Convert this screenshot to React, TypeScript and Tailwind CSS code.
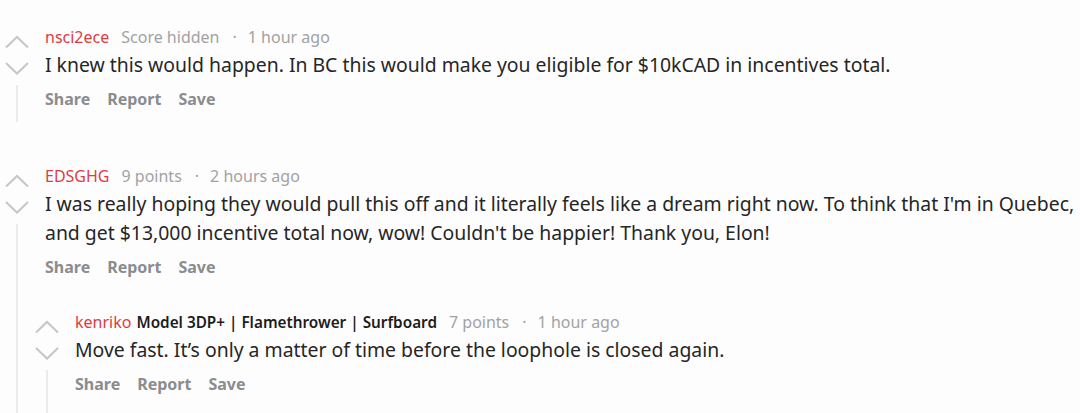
import React from 'react';

const font = { fontFamily: '"Noto Sans", "Open Sans", sans-serif' };

const UpArrow = () => (
  <svg width="26" height="14" viewBox="0 0 26 14" className="block">
    <polyline points="2,12.5 13,2 24,12.5" fill="none" stroke="#c6c6c6" strokeWidth="2" />
  </svg>
);

const DownArrow = () => (
  <svg width="26" height="14" viewBox="0 0 26 14" className="block">
    <polyline points="2,2 13,12.5 24,2" fill="none" stroke="#c6c6c6" strokeWidth="2" />
  </svg>
);

type CommentProps = {
  user: string;
  flair?: string;
  score: string;
  time: string;
  lines: string[];
  railWidth: string;
  contentPad: string;
  children?: React.ReactNode;
  bottomPad?: string;
};

const Comment: React.FC<CommentProps> = ({
  user,
  flair,
  score,
  time,
  lines,
  railWidth,
  contentPad,
  children,
  bottomPad = '',
}) => {
  return (
    <div className="flex">
      <div className={`flex ${railWidth} shrink-0 flex-col items-center pt-[8px]`}>
        <UpArrow />
        <div className="h-[12px]" />
        <DownArrow />
        <div className="mt-[10px] w-[2px] flex-1 bg-[#ececec]" />
      </div>
      <div className="flex-1">
        <div className={`${contentPad} ${bottomPad}`}>
          <div className="flex h-[20px] items-center whitespace-nowrap text-[16px] leading-[20px]">
            <span className="text-[#dd3c41]">{user}</span>
            {flair && (
              <span className="ml-[5px] text-[15.3px] font-semibold text-[#1c1c1c]">{flair}</span>
            )}
            <span className="ml-[12px] text-[#a2a2a2]">{score}</span>
            <span className="ml-[13px] text-[#a2a2a2]">·</span>
            <span className="ml-[11px] text-[#a2a2a2]">{time}</span>
          </div>
          <div className="mt-[3px] whitespace-nowrap text-[19.4px] leading-[29px] text-[#262626]">
            {lines.map((l, i) => (
              <div key={i}>{l}</div>
            ))}
          </div>
          <div className="mt-[10px] flex h-[20px] items-center gap-[17px] text-[16px] font-bold leading-[20px] text-[#8a8c8e]">
            <span>Share</span>
            <span>Report</span>
            <span>Save</span>
          </div>
        </div>
        {children}
      </div>
    </div>
  );
};

export default function App() {
  return (
    <div className="h-[413px] w-[1080px] overflow-hidden bg-[#fdfdfe] pt-[27px]" style={font}>
      <Comment
        user="nsci2ece"
        score="Score hidden"
        time="1 hour ago"
        lines={[
          'I knew this would happen. In BC this would make you eligible for $10kCAD in incentives total.',
        ]}
        railWidth="w-[34px]"
        contentPad="pl-[11px]"
        bottomPad="pb-[13px]"
      />
      <div className="mt-[44px]">
        <Comment
          user="EDSGHG"
          score="9 points"
          time="2 hours ago"
          lines={[
            "I was really hoping they would pull this off and it literally feels like a dream right now. To think that I'm in Quebec,",
            "and get $13,000 incentive total now, wow! Couldn't be happier! Thank you, Elon!",
          ]}
          railWidth="w-[34px]"
          contentPad="pl-[11px]"
          bottomPad="pb-[35px]"
        >
          <Comment
            user="kenriko"
            flair="Model 3DP+ | Flamethrower | Surfboard"
            score="7 points"
            time="1 hour ago"
            lines={['Move fast. It’s only a matter of time before the loophole is closed again.']}
            railWidth="w-[26px]"
            contentPad="pl-[15px]"
            bottomPad="pb-[40px]"
          />
        </Comment>
      </div>
    </div>
  );
}
